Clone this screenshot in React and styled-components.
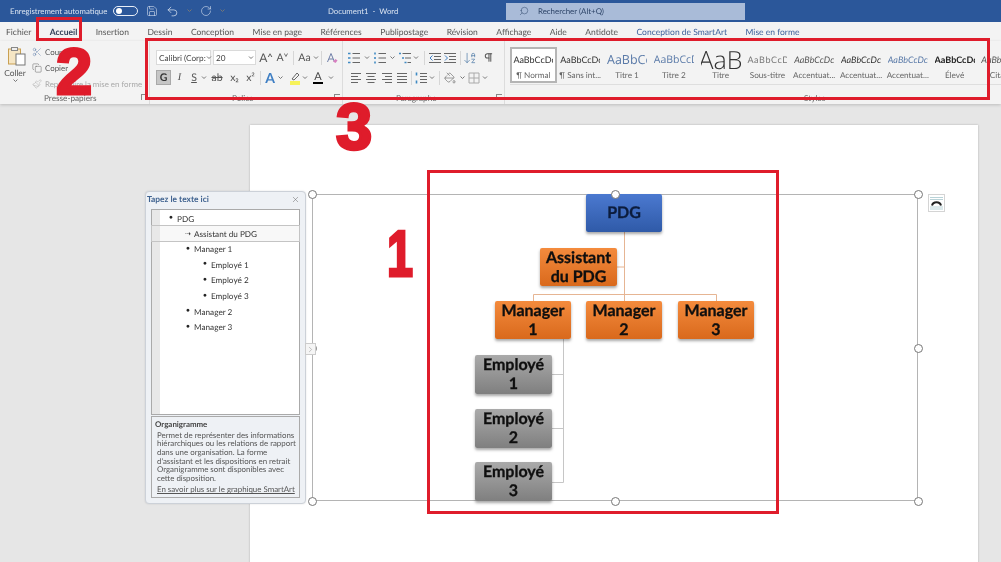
import React from 'react';
import styled, { createGlobalStyle } from 'styled-components';
import { Save, Undo2, RotateCw, Search, Scissors, Copy, Paintbrush, X, ArrowDownAZ, Pilcrow, PaintBucket, ChevronRight } from 'lucide-react';

const GlobalStyle = createGlobalStyle`
  html, body { margin: 0; padding: 0; background: #e6e6e6; overflow: hidden; }
  body { font-family: "Lato", "Open Sans", sans-serif; text-rendering: geometricPrecision; }
`;

const Screen = styled.div`
  position: relative;
  width: 1001px;
  height: 562px;
  overflow: hidden;
  background: #e6e6e6;
  filter: blur(0.3px);
`;

/* title bar */
const TitleBar = styled.header`
  display: flex;
  align-items: center;
  height: 22px;
  padding-left: 10px;
  background: #2b579a;
  color: #dbe4f1;
  font-size: 7.8px;
`;
const AutoSave = styled.span`
  flex: none;
  width: 103px;
  white-space: nowrap;
`;
const Toggle = styled.span`
  display: flex;
  flex: none;
  align-items: center;
  width: 25px;
  height: 10px;
  box-sizing: border-box;
  border: 1px solid #e8eef7;
  border-radius: 6px;
  padding-left: 2px;
  margin-right: 8px;
  &::before {
    content: '';
    width: 6px;
    height: 6px;
    border-radius: 50%;
    background: #fff;
  }
`;
const QuickIcons = styled.div`
  display: flex;
  flex: none;
  align-items: center;
  gap: 8px;
  width: 182px;
  color: #d5dfee;
`;
const DocTitle = styled.span`
  flex: none;
  width: 178px;
  white-space: pre;
`;
const SearchBox = styled.div`
  display: flex;
  flex: none;
  align-items: center;
  gap: 9px;
  width: 239px;
  height: 17px;
  padding-left: 13px;
  box-sizing: border-box;
  background: #a9bbd8;
  color: #2d4468;
  font-size: 7.9px;
`;
const SearchGlass = styled(Search)`
  transform: scaleX(-1);
`;

/* tabs */
const TabBar = styled.nav`
  display: flex;
  align-items: center;
  gap: 18.5px;
  height: 19px;
  padding-left: 6px;
  background: #f3f3f3;
  font-size: 8.5px;
  color: #555;
  white-space: nowrap;
`;
const Tab = styled.span`
  color: ${p => (p.$context ? '#3b5f9a' : p.$active ? '#33425a' : '#555')};
  font-weight: ${p => (p.$active ? 700 : 400)};
`;

/* ribbon */
const Ribbon = styled.section`
  display: flex;
  height: 63px;
  background: #f3f3f3;
  box-shadow: 0 1px 3px rgba(0, 0, 0, 0.18);
  overflow: hidden;
`;
const Group = styled.div`
  position: relative;
  flex: none;
  width: ${p => p.$w}px;
  height: 100%;
  box-sizing: border-box;
  border-right: ${p => (p.$last ? 'none' : '1px solid #dcdcdc')};
`;
const GroupBody = styled.div`
  display: flex;
  flex-direction: column;
  gap: 5px;
  height: 50px;
  padding: 9px 0 0 ${p => p.$pad || 0}px;
  box-sizing: border-box;
`;
const GroupLabel = styled.div`
  position: absolute;
  left: ${p => p.$x}px;
  top: 52px;
  font-size: 8.2px;
  color: #666;
  white-space: nowrap;
`;
const Launcher = styled.span`
  position: absolute;
  right: 2px;
  top: 53px;
  width: 5px;
  height: 5px;
  border-left: 1px solid #888;
  border-top: 1px solid #888;
`;
const Row = styled.div`
  display: flex;
  align-items: center;
  height: 15px;
  color: #555;
`;
const Cell = styled.span`
  display: flex;
  align-items: center;
  justify-content: center;
  flex: none;
  width: ${p => p.$w || 15}px;
  height: 15px;
  color: ${p => p.$color || 'inherit'};
  font-family: ${p => (p.$serif ? '"Liberation Serif", serif' : 'inherit')};
  font-size: ${p => p.$size || 10.5}px;
  font-style: ${p => (p.$italic ? 'italic' : 'normal')};
  font-weight: ${p => (p.$bold ? 700 : 400)};
  text-decoration: ${p => p.$deco || 'none'};
`;
const ActiveCell = styled(Cell)`
  background: #c6c6c6;
  border: 1px solid #a9a9a9;
  box-sizing: border-box;
  color: #333;
`;
const Divider = styled.span`
  flex: none;
  width: 1px;
  height: 14px;
  margin: 0 ${p => p.$m || 4}px;
  background: #d6d6d6;
`;
const Field = styled.span`
  flex: none;
  display: flex;
  align-items: center;
  justify-content: space-between;
  width: ${p => p.$w}px;
  height: 15px;
  margin-right: 2px;
  padding: 0 1px 0 2px;
  box-sizing: border-box;
  background: #fff;
  border: 1px solid #dadada;
  font-size: 8.2px;
  color: #444;
  white-space: nowrap;
`;
const CaretMark = styled.svg`
  flex: none;
  width: ${p => p.$w || 9}px;
  height: 6px;
  color: #777;
`;
const Caret = ({ w }) => (
  <CaretMark $w={w} viewBox={`0 0 ${w || 9} 6`}>
    <path d={`M${(w || 9) / 2 - 2} 1.500l2 2 2-2`} fill="none" stroke="currentColor" strokeWidth="1" />
  </CaretMark>
);
const ColorText = styled.span`
  display: inline-block;
  line-height: 10px;
  border-bottom: 2px solid ${p => p.$bar};
  padding: 0 1px;
  color: #444;
  font-size: 11px;
`;
const Swatch = styled.svg`
  flex: none;
  width: 12px;
  height: 14px;
  margin-left: 5px;
`;
const Glyph = styled.svg`
  width: 12px;
  height: 12px;
`;

/* line icons of the paragraph group */
const LineIcon = ({ d, dots, arrow }) => (
  <Glyph viewBox="0 0 12 12">
    <path d={d} fill="none" stroke="#666" strokeWidth="1" />
    {dots && <path d={dots} fill="none" stroke="#3f8ac4" strokeWidth="1.6" />}
    {arrow && <path d={arrow} fill="none" stroke="#3f7fc4" strokeWidth="1" />}
  </Glyph>
);
const ALIGN = {
  left: 'M1 1.500h10M1 4.500h7M1 7.500h10M1 10.500h7',
  center: 'M1 1.500h10M2.500 4.500h7M1 7.500h10M2.500 10.500h7',
  right: 'M1 1.500h10M4 4.500h7M1 7.500h10M4 10.500h7',
  justify: 'M1 1.500h10M1 4.500h10M1 7.500h10M1 10.500h10',
};

/* clipboard */
const ClipBody = styled.div`
  display: flex;
  height: 50px;
`;
const PasteCol = styled.div`
  display: flex;
  flex: none;
  flex-direction: column;
  align-items: center;
  width: 30px;
  padding-top: 5px;
  font-size: 8.4px;
  color: #555;
`;
const PasteIcon = styled.svg`
  width: 20px;
  height: 20px;
  margin-left: 4px;
`;
const PasteName = styled.span`
  margin-top: 2px;
`;
const ClipList = styled.div`
  display: flex;
  flex-direction: column;
  gap: 3px;
  padding: 4px 0 0 2px;
`;
const ClipItem = styled.div`
  display: flex;
  align-items: center;
  gap: 3px;
  height: 13px;
  font-size: 7.9px;
  white-space: nowrap;
  color: ${p => (p.$off ? '#a9a9a9' : '#555')};
`;

/* style gallery */
const Gallery = styled.div`
  display: flex;
  margin: 6px 0 0 5px;
  height: 37px;
  border-bottom: 1px solid #dedede;
  width: 520px;
`;
const StyleItem = styled.div`
  flex: none;
  width: 46.8px;
  height: 36px;
  box-sizing: border-box;
  display: flex;
  flex-direction: column;
  align-items: center;
  border: 2px solid ${p => (p.$selected ? '#b5b5b5' : 'transparent')};
  background: ${p => (p.$selected ? '#fff' : 'transparent')};
  overflow: hidden;
`;
const StyleSample = styled.div`
  flex: none;
  height: 21px;
  width: 40px;
  overflow: hidden;
  display: flex;
  align-items: center;
  justify-content: ${p => (p.$big ? 'center' : 'flex-start')};
  white-space: nowrap;
  font-family: ${p => (p.$light ? '"Open Sans", sans-serif' : '"Lato", sans-serif')};
  font-size: ${p => p.$size || 9}px;
  font-style: ${p => (p.$italic ? 'italic' : 'normal')};
  font-weight: ${p => (p.$bold ? 700 : p.$big ? 300 : 400)};
  color: ${p => p.$color || '#333'};
  letter-spacing: ${p => p.$track || 0}px;
`;
const StyleName = styled.div`
  font-size: 8.2px;
  color: #666;
  white-space: nowrap;
`;

/* document */
const Workspace = styled.main`
  padding: 21px 0 0 250px;
`;
const Page = styled.div`
  width: 728px;
  height: 500px;
  padding: 69px 0 0 62px;
  box-sizing: border-box;
  background: #fff;
  box-shadow: 0 0 2px rgba(0, 0, 0, 0.25);
`;
const Frame = styled.div`
  position: relative;
  width: 606px;
  height: 307px;
  box-sizing: border-box;
  border: 1px solid #b4b4b4;
`;
const Handle = styled.span`
  position: absolute;
  left: ${p => p.$x - 1}px;
  top: ${p => p.$y - 1}px;
  width: 7px;
  height: 7px;
  margin: -4px 0 0 -4px;
  border: 1px solid #777;
  border-radius: 50%;
  background: #fff;
  z-index: 2;
`;
const Connectors = styled.svg`
  position: absolute;
  left: -1px;
  top: -1px;
  width: 606px;
  height: 307px;
`;
const NODE_FILL = {
  blue: 'linear-gradient(#4b79d0, #2f5aa8)',
  orange: 'linear-gradient(#f48b3d, #d9691c)',
  grey: 'linear-gradient(#aaaaaa, #7f7f7f)',
};
const Node = styled.div`
  position: absolute;
  left: ${p => p.$x - 1}px;
  top: ${p => p.$y - 1}px;
  width: ${p => p.$w || 76}px;
  height: ${p => p.$h || 38}px;
  padding-top: 1px;
  box-sizing: border-box;
  background: ${p => NODE_FILL[p.$tone]};
  border-radius: 2px;
  box-shadow: 0 2px 3px rgba(0, 0, 0, 0.35);
  font-weight: 700;
  font-size: 16px;
  line-height: 18.5px;
  text-align: center;
  color: ${p => (p.$tone === 'blue' ? '#0c1c3c' : '#0f0f0f')};
  -webkit-text-stroke: 0.3px currentColor;
  display: flex;
  align-items: ${p => (p.$tone === 'blue' ? 'center' : 'flex-start')};
  justify-content: center;
`;
const LayoutButton = styled.span`
  position: absolute;
  left: 615px;
  top: -1px;
  width: 17px;
  height: 18px;
  box-sizing: border-box;
  display: flex;
  align-items: center;
  justify-content: center;
  background: #fff;
  border: 1px solid #d4d4d4;
`;

/* text pane */
const TextPane = styled.aside`
  position: absolute;
  left: 145px;
  top: 191px;
  width: 161px;
  height: 313px;
  box-sizing: border-box;
  padding: 0 5px 5px;
  background: #eef1f5;
  border: 1px solid #ccd1d8;
  border-radius: 4px;
  display: flex;
  flex-direction: column;
  box-shadow: 0 0 2px rgba(0, 0, 0, 0.12);
`;
const PaneHead = styled.div`
  display: flex;
  align-items: center;
  justify-content: space-between;
  height: 17px;
  padding-bottom: 2px;
  box-sizing: border-box;
  margin-left: -4px;
  font-size: 8.4px;
  font-weight: 700;
  color: #3f628f;
`;
const Outline = styled.div`
  position: relative;
  height: 208px;
  box-sizing: border-box;
  padding-top: 1px;
  background: linear-gradient(90deg, #e8e8e8 8px, #fff 8px);
  border: 1px solid #aaa;
`;
const OutlineRow = styled.div`
  display: flex;
  align-items: center;
  height: ${p => (p.$selected ? 15 : 15.6)}px;
  padding-left: ${p => 16 + p.$level * 17}px;
  box-sizing: border-box;
  font-size: 8.2px;
  color: #333;
  white-space: nowrap;
  background: ${p => (p.$selected ? 'linear-gradient(90deg, #e8e8e8 8px, #f8f8f8 8px)' : 'transparent')};
  outline: ${p => (p.$selected ? '1px solid #c4c4c4' : 'none')};
  &::before {
    content: '${p => (p.$selected ? '⇢' : '•')}';
    width: 9px;
    font-family: "DejaVu Sans", sans-serif;
    font-size: ${p => (p.$selected ? 7 : 10)}px;
    color: #222;
  }
`;
const Info = styled.div`
  flex: 1;
  margin-top: 1px;
  padding: 3px 3px;
  border: 1px solid #aaa;
  font-size: 7.9px;
  line-height: 8.6px;
  color: #555;
`;
const InfoTitle = styled.div`
  font-weight: 700;
  color: #444;
  margin-bottom: 2px;
`;
const InfoText = styled.p`
  margin: 0 0 3px 2px;
  white-space: pre;
`;
const InfoLink = styled.span`
  margin-left: 2px;
  text-decoration: underline;
  white-space: nowrap;
`;
const ExpandTab = styled.span`
  position: absolute;
  left: 305px;
  top: 343px;
  width: 11px;
  height: 12px;
  box-sizing: border-box;
  display: flex;
  align-items: center;
  justify-content: center;
  background: #f5f5f5;
  border: 1px solid #ccc;
  color: #888;
  z-index: 3;
`;

/* red annotations */
const Mark = styled.span`
  position: absolute;
  left: ${p => p.$x}px;
  top: ${p => p.$y}px;
  width: ${p => p.$w}px;
  height: ${p => p.$h}px;
  box-sizing: border-box;
  border: 3px solid #df1c2b;
  z-index: 5;
`;
const Digit = styled.span`
  position: absolute;
  left: ${p => p.$x}px;
  top: ${p => p.$y}px;
  font-family: "Liberation Sans", sans-serif;
  font-weight: 700;
  font-size: 65px;
  line-height: 1;
  color: #df1c2b;
  -webkit-text-stroke: 3px #df1c2b;
  transform: scaleX(${p => p.$squeeze || 1});
  transform-origin: left;
  z-index: 6;
`;

const tabs = ['Insertion', 'Dessin', 'Conception', 'Mise en page', 'Références', 'Publipostage', 'Révision', 'Affichage', 'Aide', 'Antidote'];

const styleItems = [
  { name: '¶ Normal', selected: true },
  { name: '¶ Sans int...' },
  { name: 'Titre 1', size: 12.5, color: '#5a7aa8', light: true, sample: 'AaBbCc' },
  { name: 'Titre 2', size: 10.5, color: '#5a7aa8', light: true, sample: 'AaBbCcD' },
  { name: 'Titre', size: 25, big: true, light: true, sample: 'AaB' },
  { name: 'Sous-titre', color: '#777', track: 0.6, sample: 'AaBbCcD' },
  { name: 'Accentuat...', italic: true, color: '#555' },
  { name: 'Accentuat...', italic: true, color: '#333' },
  { name: 'Accentuat...', italic: true, color: '#5a7aa8' },
  { name: 'Élevé', bold: true, color: '#222' },
  { name: 'Citat...', italic: true, color: '#555' },
];

const outline = [
  [0, 'PDG'],
  [1, 'Assistant du PDG', true],
  [1, 'Manager 1'],
  [2, 'Employé 1'],
  [2, 'Employé 2'],
  [2, 'Employé 3'],
  [1, 'Manager 2'],
  [1, 'Manager 3'],
];

const nodes = [
  { x: 274, y: 0, tone: 'blue', text: ['PDG'] },
  { x: 228, y: 54, w: 77, tone: 'orange', text: ['Assistant', 'du PDG'] },
  { x: 183, y: 107, tone: 'orange', text: ['Manager', '1'] },
  { x: 274, y: 107, tone: 'orange', text: ['Manager', '2'] },
  { x: 366, y: 107, tone: 'orange', text: ['Manager', '3'] },
  { x: 163, y: 161, w: 77, h: 39, tone: 'grey', text: ['Employé', '1'] },
  { x: 163, y: 215, w: 77, h: 39, tone: 'grey', text: ['Employé', '2'] },
  { x: 163, y: 268, w: 77, h: 39, tone: 'grey', text: ['Employé', '3'] },
];

const handles = [[0, 0], [303, 0], [606, 0], [0, 154], [606, 154], [0, 307], [303, 307], [606, 307]];

const App = () => (
  <Screen>
    <GlobalStyle />
    <TitleBar>
      <AutoSave>Enregistrement automatique</AutoSave>
      <Toggle />
      <QuickIcons>
        <Save size={12} strokeWidth={1.2} />
        <Undo2 size={13} strokeWidth={1.4} />
        <Caret w={5} />
        <RotateCw size={12} strokeWidth={1.2} />
        <Caret w={5} />
      </QuickIcons>
      <DocTitle>Document1  -  Word</DocTitle>
      <SearchBox>
        <SearchGlass size={10} strokeWidth={1.2} />
        Rechercher (Alt+Q)
      </SearchBox>
    </TitleBar>

    <TabBar>
      <Tab>Fichier</Tab>
      <Tab $active>Accueil</Tab>
      {tabs.map(t => <Tab key={t}>{t}</Tab>)}
      <Tab $context>Conception de SmartArt</Tab>
      <Tab $context>Mise en forme</Tab>
    </TabBar>

    <Ribbon>
      <Group $w={150}>
        <ClipBody>
          <PasteCol>
            <PasteIcon viewBox="0 0 20 20">
              <rect x="1.500" y="3" width="12" height="15" fill="#f6e6c4" stroke="#c9a052" />
              <rect x="4.500" y="1.500" width="6" height="3" fill="#eee" stroke="#888" />
              <rect x="9" y="8" width="9" height="11" fill="#fff" stroke="#777" />
            </PasteIcon>
            <PasteName>Coller</PasteName>
            <Caret />
          </PasteCol>
          <ClipList>
            <ClipItem><Scissors size={10} strokeWidth={1.1} color="#5a7aa8" />Couper</ClipItem>
            <ClipItem><Copy size={10} strokeWidth={1.1} />Copier</ClipItem>
            <ClipItem $off><Paintbrush size={10} strokeWidth={1.1} />Reproduire la mise en forme</ClipItem>
          </ClipList>
        </ClipBody>
        <GroupLabel $x={44}>Presse-papiers</GroupLabel>
        <Launcher />
      </Group>

      <Group $w={193}>
        <GroupBody $pad={6}>
          <Row>
            <Field $w={55}>Calibri (Corp: <Caret w={6} /></Field>
            <Field $w={43}>20 <Caret w={6} /></Field>
            <Cell $w={16} $size={12}>A˄</Cell>
            <Cell $w={17} $size={10.5}>A˅</Cell>
            <Divider $m={2} />
            <Cell $w={17} $size={10.5}>Aa</Cell>
            <Caret w={6} />
            <Divider $m={2} />
            <Cell $w={15}>
              <Glyph viewBox="0 0 12 12">
                <path d="M1.500 10 5 1.500 8.500 10M3 7h4" fill="none" stroke="#6f7fa8" />
                <path d="M7 9.500 9.500 7l2 1.500L9.500 11z" fill="#d77fc0" />
              </Glyph>
            </Cell>
          </Row>
          <Row>
            <ActiveCell $bold>G</ActiveCell>
            <Cell $serif $italic $w={17}>I</Cell>
            <Cell $deco="underline" $w={12}>S</Cell>
            <Caret w={8} />
            <Cell $deco="line-through" $w={18}>ab</Cell>
            <Cell $w={17}>x₂</Cell>
            <Cell $w={15}>x²</Cell>
            <Divider $m={2} />
            <Cell $w={14} $size={14} $bold $color="#3f7fc4">A</Cell>
            <Caret w={7} />
            <Swatch viewBox="0 0 12 14">
              <path d="M3 8 8 2l2 2-5 5z" fill="none" stroke="#666" />
              <rect x="1" y="10" width="10" height="4" fill="#f7f25a" />
            </Swatch>
            <Caret w={8} />
            <Cell $w={18}><ColorText $bar="#000">A</ColorText></Cell>
            <Caret w={8} />
          </Row>
        </GroupBody>
        <GroupLabel $x={82}>Police</GroupLabel>
        <Launcher />
      </Group>

      <Group $w={162}>
        <GroupBody $pad={5}>
          <Row>
            <Cell $w={12}><LineIcon d="M4.500 1.500H12M4.500 6H12M4.500 10.500H12" dots="M0 1.500h2.500M0 6h2.500M0 10.500h2.500" /></Cell>
            <Caret w={14} />
            <Cell $w={12}><LineIcon d="M4.500 1.500H12M4.500 6H12M4.500 10.500H12" dots="M1 .5v2M1 5v2M1 9.500v2" /></Cell>
            <Caret w={13} />
            <Cell $w={12}><LineIcon d="M3.500 1.500H12M6 6h6M8.500 10.500H12" dots="M0 1.500h2M3 6h2M5.500 10.500h2" /></Cell>
            <Caret w={10} />
            <Divider $m={3} />
            <Cell $w={14}><LineIcon d="M0 1.500h12M5 4.500h7M5 7.500h7M0 10.500h12" arrow="M3.500 3.500 1 6l2.500 2.500" /></Cell>
            <Cell $w={16}><LineIcon d="M0 1.500h12M5 4.500h7M5 7.500h7M0 10.500h12" arrow="M1 3.500 3.500 6 1 8.500" /></Cell>
            <Divider $m={2} />
            <Cell $w={14}><ArrowDownAZ size={14} strokeWidth={1.1} color="#3f6f9f" /></Cell>
            <Cell $w={22}><Pilcrow size={11} strokeWidth={2.2} /></Cell>
          </Row>
          <Row>
            <Cell $w={15}><LineIcon d={ALIGN.left} /></Cell>
            <Cell $w={16}><LineIcon d={ALIGN.center} /></Cell>
            <Cell $w={15}><LineIcon d={ALIGN.right} /></Cell>
            <Cell $w={15}><LineIcon d={ALIGN.justify} /></Cell>
            <Divider $m={2} />
            <Cell $w={14}><LineIcon d="M5 1.500h7M5 4.500h7M5 7.500h7M5 10.500h7" dots="M1.500 .5v3M1.500 8.500v3" /></Cell>
            <Caret w={8} />
            <Divider $m={3} />
            <Cell $w={14}><PaintBucket size={12} strokeWidth={1.1} /></Cell>
            <Caret w={11} />
            <Cell $w={12}>
              <Glyph viewBox="0 0 12 12">
                <path d="M1 1h10v10H1zM6 1v10M1 6h10" fill="none" stroke="#aaa" />
              </Glyph>
            </Cell>
            <Caret w={10} />
          </Row>
        </GroupBody>
        <GroupLabel $x={53}>Paragraphe</GroupLabel>
        <Launcher />
      </Group>

      <Group $w={496} $last>
        <Gallery>
          {styleItems.map((s, i) => (
            <StyleItem key={i} $selected={s.selected}>
              <StyleSample
                $size={s.size}
                $color={s.color}
                $italic={s.italic}
                $bold={s.bold}
                $light={s.light}
                $big={s.big}
                $track={s.track}
              >
                {s.sample || 'AaBbCcDc'}
              </StyleSample>
              <StyleName>{s.name}</StyleName>
            </StyleItem>
          ))}
        </Gallery>
        <GroupLabel $x={299}>Styles</GroupLabel>
      </Group>
    </Ribbon>

    <Workspace>
      <Page>
        <Frame>
          {handles.map(([x, y]) => <Handle key={`${x}-${y}`} $x={x} $y={y} />)}
          <Connectors viewBox="0 0 606 307">
            <path d="M312.500 38V100M305 73H312.500M221.500 107V100.500H404.500V107M312.500 100V107" fill="none" stroke="#e6b593" />
            <path d="M251.500 145V288.500H240M240 180.500H251.500M240 234.500H251.500" fill="none" stroke="#c6c6c6" />
          </Connectors>
          {nodes.map(n => (
            <Node key={n.text.join()} $x={n.x} $y={n.y} $w={n.w} $h={n.h} $tone={n.tone}>
              <span>{n.text[0]}{n.text[1] && <br />}{n.text[1]}</span>
            </Node>
          ))}
          <LayoutButton>
            <svg width="13" height="14" viewBox="0 0 13 14">
              <path d="M0 1.500h13M0 3.500h13M0 11h13M0 13h13" stroke="#b9d3d8" />
              <path d="M2 9.500C3 5 10 5 11 9.500" fill="none" stroke="#222" strokeWidth="2" />
            </svg>
          </LayoutButton>
        </Frame>
      </Page>
    </Workspace>

    <TextPane>
      <PaneHead>
        Tapez le texte ici
        <X size={9} strokeWidth={1.3} color="#666" />
      </PaneHead>
      <Outline>
        {outline.map(([level, text, selected]) => (
          <OutlineRow key={text} $level={level} $selected={selected}>{text}</OutlineRow>
        ))}
      </Outline>
      <Info>
        <InfoTitle>Organigramme</InfoTitle>
        <InfoText>{"Permet de représenter des informations\nhiérarchiques ou les relations de rapport\ndans une organisation. La forme\nd'assistant et les dispositions en retrait\nOrganigramme sont disponibles avec\ncette disposition."}</InfoText>
        <InfoLink>En savoir plus sur le graphique SmartArt</InfoLink>
      </Info>
    </TextPane>
    <ExpandTab><ChevronRight size={9} strokeWidth={1.3} /></ExpandTab>

    <Mark $x={427} $y={170} $w={352} $h={344} />
    <Mark $x={36} $y={17} $w={46} $h={24} />
    <Mark $x={145} $y={38} $w={845} $h={62} />
    <Digit $x={387} $y={221} $squeeze={0.72}>1</Digit>
    <Digit $x={56} $y={39}>2</Digit>
    <Digit $x={336} $y={94}>3</Digit>
  </Screen>
);

export default App;
